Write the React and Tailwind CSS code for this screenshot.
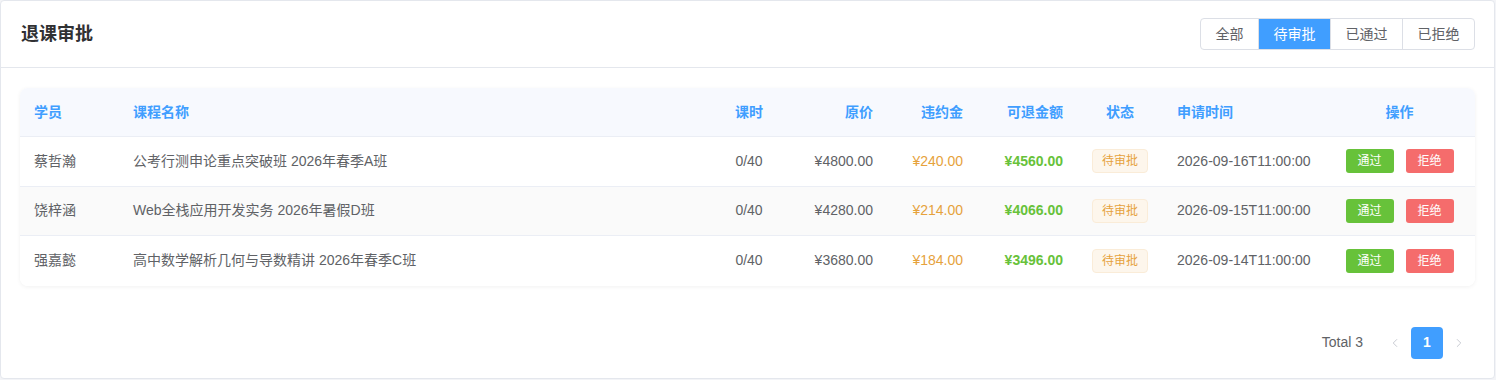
import { ChevronLeft, ChevronRight } from 'lucide-react';

const rows = [
  { name: '蔡哲瀚', course: '公考行测申论重点突破班 2026年春季A班', hours: '0/40', price: '¥4800.00', fee: '¥240.00', refund: '¥4560.00', time: '2026-09-16T11:00:00' },
  { name: '饶梓涵', course: 'Web全栈应用开发实务 2026年暑假D班', hours: '0/40', price: '¥4280.00', fee: '¥214.00', refund: '¥4066.00', time: '2026-09-15T11:00:00' },
  { name: '强嘉懿', course: '高中数学解析几何与导数精讲 2026年春季C班', hours: '0/40', price: '¥3680.00', fee: '¥184.00', refund: '¥3496.00', time: '2026-09-14T11:00:00' },
];

const tabs = ['全部', '待审批', '已通过', '已拒绝'];

// column template shared by header and rows
const cols = 'grid grid-cols-[100px_1fr_80px_96px_90px_100px_88px_160px_151px] items-center';

export default function App() {
  return (
    <div className="w-[1496px] h-[380px] bg-[#f3f4f7] font-['Liberation_Sans','Noto_Sans_CJK_SC',sans-serif]">
      <div className="w-[1495px] h-[379px] bg-white border border-[#e4e7ed] rounded-[4px] flex flex-col">
        {/* Header */}
        <div className="flex items-center justify-between pl-5 pr-[19px] py-[17px] border-b border-[#e4e7ed]">
          <h2 className="text-[18px] font-bold text-[#303133]">退课审批</h2>
          <div className="flex h-[32px] border border-[#dcdfe6] rounded-[4px] overflow-hidden text-[14px]">
            {tabs.map((t, i) => (
              <div
                key={t}
                className={`flex items-center px-[14.5px] ${i > 0 ? 'border-l border-[#dcdfe6]' : ''} ${
                  t === '待审批' ? 'bg-[#409eff] text-white border-[#409eff]' : 'text-[#606266]'
                }`}
              >
                {t}
              </div>
            ))}
          </div>
        </div>

        {/* Body */}
        <div className="pl-[19px] pr-[19px] py-5 flex flex-col">
          <div className="rounded-[8px] overflow-hidden shadow-[0_1px_4px_rgba(0,0,0,0.06)] text-[14px]">
            <div className={`${cols} h-[49px] bg-[#f7f9fe] border-b border-[#ebeef5] text-[#409eff] font-bold`}>
              <div className="pl-[14px]">学员</div>
              <div className="pl-[13px]">课程名称</div>
              <div className="text-center pr-[2px]">课时</div>
              <div className="text-right pr-[13px]">原价</div>
              <div className="text-right pr-[13px]">违约金</div>
              <div className="text-right pr-[13px]">可退金额</div>
              <div className="text-center">状态</div>
              <div className="pl-[13px]">申请时间</div>
              <div className="text-center">操作</div>
            </div>
            {rows.map((r, i) => (
              <div
                key={r.name}
                className={`${cols} h-[49.5px] text-[#606266] ${i % 2 === 1 ? 'bg-[#fafafa]' : 'bg-white'} ${
                  i < rows.length - 1 ? 'border-b border-[#ebeef5]' : ''
                }`}
              >
                <div className="pl-[14px]">{r.name}</div>
                <div className="pl-[13px]">{r.course}</div>
                <div className="text-center pr-[2px]">{r.hours}</div>
                <div className="text-right pr-[13px]">{r.price}</div>
                <div className="text-right pr-[13px] text-[#e6a23c]">{r.fee}</div>
                <div className="text-right pr-[13px] text-[#67c23a] font-bold">{r.refund}</div>
                <div className="flex justify-center">
                  <span className="h-[24px] px-[9px] flex items-center text-[12px] text-[#e6a23c] bg-[#fdf6ec] border border-[#faecd8] rounded-[4px]">
                    待审批
                  </span>
                </div>
                <div className="pl-[13px]">{r.time}</div>
                <div className="flex justify-center gap-3">
                  <button className="w-[48px] h-[24px] rounded-[3px] bg-[#67c23a] text-white text-[12px]">通过</button>
                  <button className="w-[48px] h-[24px] rounded-[3px] bg-[#f56c6c] text-white text-[12px]">拒绝</button>
                </div>
              </div>
            ))}
          </div>

          {/* Pagination */}
          <div className="mt-[41px] flex items-center justify-end text-[14px] text-[#606266]">
            <span className="mr-4">Total 3</span>
            <button className="w-[32px] h-[32px] flex items-center justify-center text-[#c0c4cc]">
              <ChevronLeft size={14} strokeWidth={1.5} />
            </button>
            <button className="w-[32px] h-[32px] rounded-[4px] bg-[#409eff] text-white font-bold">1</button>
            <button className="w-[32px] h-[32px] flex items-center justify-center text-[#c0c4cc]">
              <ChevronRight size={14} strokeWidth={1.5} />
            </button>
          </div>
        </div>
      </div>
    </div>
  );
}
